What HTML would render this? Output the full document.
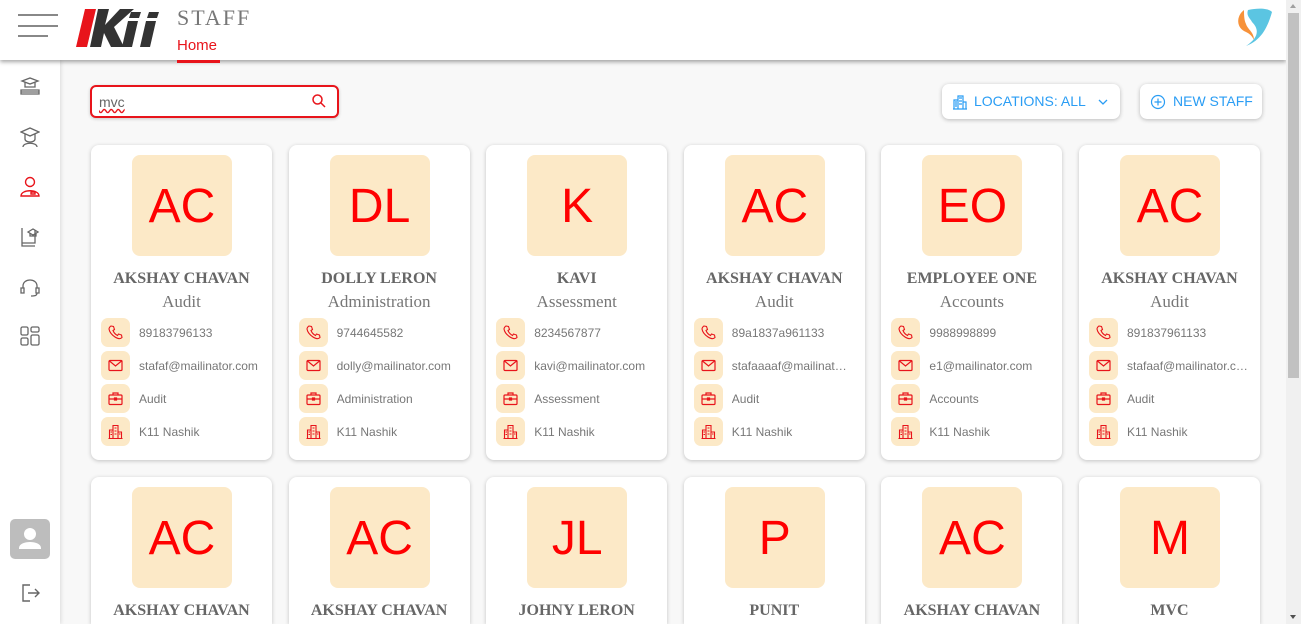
<!DOCTYPE html>
<html style="height:624px;overflow:hidden"><head><meta charset="utf-8"><style>
*{box-sizing:border-box;margin:0;padding:0}
body{width:1301px;height:624px;overflow:hidden;background:#f8f8f8;font-family:"Liberation Sans",sans-serif;position:relative}
#wrap{position:absolute;left:0;top:0;width:1301px;height:624px;overflow:hidden}
.hdr{position:absolute;left:0;top:0;width:1286px;height:60px;background:#fff;box-shadow:0 2px 4px rgba(0,0,0,.35);z-index:3}
.side{position:absolute;left:0;top:60px;width:60px;height:564px;background:#fff;box-shadow:1px 0 4px rgba(0,0,0,.12);z-index:2}
.sb{position:absolute;right:0;top:0;width:15px;height:624px;background:#f0f0f0;z-index:5}
.thumb{position:absolute;left:2px;top:13px;width:11px;height:365px;background:#c1c1c1}
.card{position:absolute;width:181px;height:315px;background:#fff;border-radius:8px;box-shadow:0 1px 4px rgba(0,0,0,.22);overflow:hidden}
.card.b{height:147px;border-radius:8px 8px 0 0}
.av{position:absolute;left:41px;top:10px;width:100px;height:101px;background:#fce9c7;border-radius:8px;color:#f00;font-size:48px;text-align:center;line-height:103px}
.nm{position:absolute;left:0;width:181px;top:125px;text-align:center;font-family:"Liberation Serif","DejaVu Serif",serif;font-weight:bold;font-size:16px;color:#666}
.dp{position:absolute;left:0;width:181px;top:147px;text-align:center;font-family:"Liberation Serif",serif;font-size:17px;color:#777}
.row{position:absolute;left:10px;height:30px;width:165px}
.ic{position:absolute;left:0;top:0;width:29px;height:29px;background:#fce9c7;border-radius:7px}
.ic svg{position:absolute;left:7px;top:7px}
.tx{position:absolute;left:38px;top:8px;font-size:12px;color:#777;white-space:nowrap;overflow:hidden;text-overflow:ellipsis;width:121px}
.btn{position:absolute;top:84px;height:35px;background:#fff;border-radius:7px;box-shadow:0 1px 4px rgba(0,0,0,.25);color:#2a9df4;font-size:14px;line-height:35px}
</style></head><body><div id="wrap">
<div class="hdr">
 <div style="position:absolute;left:18px;top:14px;width:40px;height:2px;background:#888"></div>
 <div style="position:absolute;left:18px;top:25px;width:40px;height:2px;background:#888"></div>
 <div style="position:absolute;left:18px;top:35px;width:30px;height:2px;background:#888"></div>
 <svg style="position:absolute;left:76px;top:9px" width="90" height="40" viewBox="0 0 90 40">
  <polygon points="9,0 20,0 11,38 0,38" fill="#e8141b"/>
  <polygon points="22,0 33,0 29,16 44,0 58,0 38,18 48,38 35,38 28,24 25,38 14,38" fill="#333"/>
  <polygon points="52,12 62,12 56,38 46,38" fill="#333"/><polygon points="55,3 65,3 63,9 53,9" fill="#333"/>
  <polygon points="70,12 80,12 74,38 64,38" fill="#333"/><polygon points="73,3 83,3 81,9 71,9" fill="#333"/>
 </svg>
 <div style="position:absolute;left:177px;top:5px;font-family:'Liberation Serif',serif;font-size:22px;letter-spacing:2px;color:#777">STAFF</div>
 <div style="position:absolute;left:177px;top:37px;font-size:15px;color:#e8141b">Home</div>
 <div style="position:absolute;left:177px;top:60px;width:43px;height:3px;background:#e8141b"></div>
 <svg style="position:absolute;left:1232px;top:6px" width="42" height="42" viewBox="0 0 42 42">
  <path d="M12 4 C4 10 4 22 14 26 C18 28 20 30 22 34 C22 26 16 24 14 18 C12 14 12 8 12 4Z" fill="#f7923a"/>
  <path d="M16 4 C26 2 36 2 40 6 C36 20 30 34 14 40 C26 32 28 24 20 16 C18 12 14 10 16 4Z" fill="#5bc5e2"/>
 </svg>
</div>
<div class="side">
 <svg style="position:absolute;left:20px;top:16px" width="20" height="22" viewBox="0 0 20 22" fill="none" stroke="#666" stroke-width="1.3"><path d="M2 5 L10 2 L18 5 L10 8Z M5 6.5 V11 H15 V6.5 M1 14 H19 V18 H1Z M1 16 H19"/></svg>
 <svg style="position:absolute;left:20px;top:66px" width="20" height="22" viewBox="0 0 20 22" fill="none" stroke="#666" stroke-width="1.3"><path d="M1 6 L10 2 L19 6 L10 10Z M5 8 V13 C5 17 15 17 15 13 V8 M3 21 C3 16 17 16 17 21"/></svg>
 <svg style="position:absolute;left:20px;top:116px" width="20" height="22" viewBox="0 0 20 22" fill="none" stroke="#e8141b" stroke-width="1.4"><circle cx="10" cy="6" r="4.5"/><path d="M1 20 C1 13 19 13 19 20Z M11 16 H15 V18 H11Z"/></svg>
 <svg style="position:absolute;left:20px;top:166px" width="20" height="22" viewBox="0 0 20 22" fill="none" stroke="#666" stroke-width="1.3"><path d="M2 2 V20 H15 M2 17 H15 V4 M8 6 L13 3 L18 6 L13 9Z M10 7 V10 H16 V7"/></svg>
 <svg style="position:absolute;left:20px;top:216px" width="20" height="22" viewBox="0 0 20 22" fill="none" stroke="#666" stroke-width="1.3"><path d="M3 12 V10 C3 2 17 2 17 10 V12 M1 12 H4 V17 H1Z M16 12 H19 V17 H16Z M17 17 C17 20 14 20 11 20"/></svg>
 <svg style="position:absolute;left:20px;top:266px" width="20" height="20" viewBox="0 0 20 20" fill="none" stroke="#666" stroke-width="1.3"><rect x="1" y="1" width="7" height="8" rx="1.5"/><rect x="11" y="1" width="8" height="5" rx="1.5"/><rect x="11" y="9" width="8" height="10" rx="1.5"/><rect x="1" y="12" width="7" height="7" rx="1.5"/></svg>
 <div style="position:absolute;left:10px;top:459px;width:40px;height:40px;background:#bdbdbd;border-radius:5px"><svg width="40" height="40" viewBox="0 0 40 40"><circle cx="20" cy="15" r="6" fill="#fff"/><path d="M9 29 C9 21 31 21 31 29 V30 H9Z" fill="#fff"/></svg></div>
 <svg style="position:absolute;left:21px;top:523px" width="20" height="20" viewBox="0 0 20 20" fill="none" stroke="#666" stroke-width="1.4"><path d="M9 2 H2 V18 H9 M7 10 H18 M14 6 L18 10 L14 14"/></svg>
</div>
<div style="position:absolute;left:90px;top:85px;width:249px;height:33px;border:2px solid #e8141b;border-radius:6px;background:#fff;box-shadow:0 1px 3px rgba(0,0,0,.2)">
 <span style="position:absolute;left:7px;top:7px;font-size:14px;color:#666;text-decoration:underline wavy #e8141b">mvc</span>
 <svg style="position:absolute;left:219px;top:6px" width="16" height="16" viewBox="0 0 16 16" fill="none" stroke="#e8141b" stroke-width="1.5"><circle cx="6.5" cy="6.5" r="4.5"/><path d="M10 10 L14 14"/></svg>
</div>
<div class="btn" style="left:942px;width:178px"><svg style="position:absolute;left:10px;top:10px" width="16" height="16" viewBox="0 0 16 16" fill="none" stroke="#2a9df4" stroke-width="1.2"><path d="M1 15 H15 M2 15 V6 H6 V15 M6 15 V2 H11 V15 M11 8 H14 V15 M3 8 H5 M3 10 H5 M3 12 H5 M7 4 H10 M7 7 H10 M7 10 H10"/></svg><span style="position:absolute;left:32px">LOCATIONS: ALL</span><svg style="position:absolute;left:156px;top:14px" width="10" height="8" viewBox="0 0 10 8" fill="none" stroke="#2a9df4" stroke-width="1.3"><path d="M1 2 L5 6 L9 2"/></svg></div>
<div class="btn" style="left:1140px;width:122px"><svg style="position:absolute;left:10px;top:10px" width="16" height="16" viewBox="0 0 16 16" fill="none" stroke="#2a9df4" stroke-width="1.2"><circle cx="8" cy="8" r="6.5"/><path d="M8 4.5 V11.5 M4.5 8 H11.5"/></svg><span style="position:absolute;left:33px">NEW STAFF</span></div>
<div id="cards"></div>
<div class="sb"><div class="thumb"></div><div style="position:absolute;left:4px;top:4px;border:3.5px solid transparent;border-bottom:4px solid #a0a0a0;border-top:0"></div><div style="position:absolute;left:4px;top:615px;border:3.5px solid transparent;border-top:4px solid #505050;border-bottom:0"></div></div>
</div>
<script>
var P='<svg width="15" height="15" viewBox="0 0 15 15" fill="none" stroke="#e8141b" stroke-width="1.1"><path d="M3 1 L5.5 1.5 L6.5 4.5 L5 5.5 C6 8 7.5 9.5 9.5 10.5 L10.5 9 L13.5 10 L14 12.5 C12.5 14 10 14 7 12 C4 10 1.5 7 1 4 C1 3 2 1.5 3 1Z"/></svg>';
var M='<svg width="15" height="15" viewBox="0 0 15 15" fill="none" stroke="#e8141b" stroke-width="1.2"><rect x="1" y="2.5" width="13" height="10" rx="1"/><path d="M1.5 3 L7.5 8 L13.5 3"/></svg>';
var B='<svg width="15" height="15" viewBox="0 0 15 15" fill="none" stroke="#e8141b" stroke-width="1.2"><rect x="1" y="4" width="13" height="9.5" rx="1"/><path d="M5 4 V2 H10 V4 M1 8 H14 M6.5 7 H8.5 V9 H6.5Z"/></svg>';
var L='<svg width="15" height="15" viewBox="0 0 15 15" fill="none" stroke="#e8141b" stroke-width="1.1"><path d="M0.5 14.5 H14.5 M1.5 14.5 V6 H5 V14.5 M5 14.5 V1.5 H10 V14.5 M10 8 H13.5 V14.5 M2.5 8 H4 M2.5 10.5 H4 M6.5 4 H8.5 M6.5 7 H8.5 M6.5 10 H8.5 M11 10 H12.5"/></svg>';
var d=[["AC","AKSHAY CHAVAN","Audit","89183796133","stafaf@mailinator.com"],["DL","DOLLY LERON","Administration","9744645582","dolly@mailinator.com"],["K","KAVI","Assessment","8234567877","kavi@mailinator.com"],["AC","AKSHAY CHAVAN","Audit","89a1837a961133","stafaaaaf@mailinator.com"],["EO","EMPLOYEE ONE","Accounts","9988998899","e1@mailinator.com"],["AC","AKSHAY CHAVAN","Audit","891837961133","stafaaf@mailinator.com"],
["AC","AKSHAY CHAVAN","Audit","",""],["AC","AKSHAY CHAVAN","Audit","",""],["JL","JOHNY LERON","Administration","",""],["P","PUNIT","Audit","",""],["AC","AKSHAY CHAVAN","Audit","",""],["M","MVC","Audit","",""]];
var h='';
d.forEach(function(c,i){var x=91+(i%6)*197.6,y=i<6?145:477;
if(i<6){
h+='<div class="card" style="left:'+x+'px;top:'+y+'px"><div class="av">'+c[0]+'</div><div class="nm">'+c[1]+'</div><div class="dp">'+c[2]+'</div>';
var r=[[P,c[3]],[M,c[4]],[B,c[2]],[L,"K11 Nashik"]];
r.forEach(function(q,j){h+='<div class="row" style="top:'+(173+j*33)+'px"><div class="ic">'+q[0]+'</div><div class="tx">'+q[1]+'</div></div>';});
}else{
h+='<div class="card b" style="left:'+x+'px;top:'+y+'px"><div class="av">'+c[0]+'</div><div class="nm">'+c[1]+'</div>';
}
h+='</div>';});
document.getElementById('cards').innerHTML=h;
</script>
</body></html>
